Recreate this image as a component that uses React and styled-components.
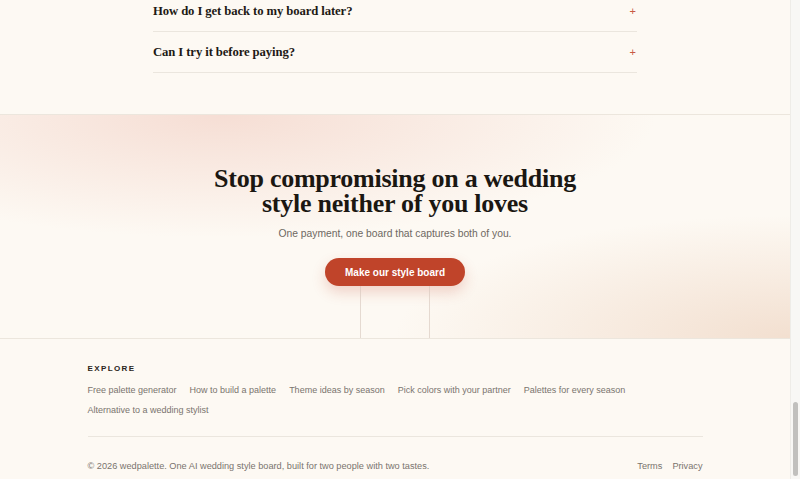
import React, { useLayoutEffect, useRef } from "react";
import styled, { createGlobalStyle } from "styled-components";

const GlobalStyle = createGlobalStyle`
  html, body {
    margin: 0;
    padding: 0;
    height: 100%;
    overflow: hidden;
    background: #fdf9f3;
  }
  #root {
    height: 100%;
  }
`;

const Window = styled.div`
  display: flex;
  height: 100vh;
`;

const Page = styled.div`
  flex: 1;
  overflow-y: scroll;
  scrollbar-width: none;
  background: #fdf9f3;
  font-family: "Liberation Sans", Arial, sans-serif;
  color: #1b1712;

  &::-webkit-scrollbar {
    display: none;
  }
`;

const ScrollRail = styled.div`
  width: 10px;
  display: flex;
  flex-direction: column;
  justify-content: flex-end;
  align-items: center;
  padding-bottom: 3px;
  box-sizing: border-box;
  background: #f8f7f5;
  border-left: 1px solid #eeece8;
`;

const ScrollThumb = styled.div`
  width: 5px;
  height: 74px;
  border-radius: 3px;
  background: #c1c0be;
`;

const FaqSection = styled.section`
  padding: 60px 0 41px;
  border-bottom: 1px solid #ece6dd;
`;

const FaqList = styled.div`
  width: 484px;
  margin: 0 auto;
`;

const FaqTitle = styled.h2`
  font-family: "Liberation Serif", serif;
  font-size: 26px;
  margin: 0 0 20px;
  text-align: center;
`;

const FaqRow = styled.div`
  display: flex;
  align-items: center;
  justify-content: space-between;
  height: 40px;
  border-bottom: 1px solid #ebe6de;
`;

const Question = styled.span`
  font-family: "Liberation Serif", serif;
  font-weight: 700;
  font-size: 12.7px;
  letter-spacing: -0.1px;
  color: #1e1915;
`;

const Plus = styled.span`
  color: #c75a43;
  font-size: 11px;
  font-weight: 400;
  padding-right: 1px;
`;

const Cta = styled.section`
  display: flex;
  flex-direction: column;
  align-items: center;
  padding-top: 51px;
  border-bottom: 1px solid #ece6dd;
  background:
    radial-gradient(ellipse 55% 55% at 28% 0%, rgba(245, 219, 209, 0.9), rgba(245, 219, 209, 0) 100%),
    radial-gradient(ellipse 50% 55% at 100% 100%, rgba(242, 222, 206, 0.95), rgba(242, 222, 206, 0) 100%),
    #fdf9f3;
`;

const CtaTitle = styled.h2`
  margin: 0;
  font-family: "Liberation Serif", serif;
  font-weight: 700;
  font-size: 26px;
  line-height: 25px;
  letter-spacing: -0.25px;
  text-align: center;
  color: #1b1712;
`;

const CtaText = styled.p`
  margin: 11px 0 0;
  font-size: 10.3px;
  line-height: 14px;
  color: #6e6862;
`;

const CtaButton = styled.button`
  margin-top: 17px;
  height: 28px;
  padding: 0 20px;
  border: none;
  border-radius: 14px;
  background: #c0442a;
  color: #fff;
  font-family: "Liberation Sans", Arial, sans-serif;
  font-size: 10px;
  font-weight: 700;
  box-shadow: 0 6px 14px rgba(192, 68, 42, 0.22);
`;

const Stems = styled.div`
  width: 68px;
  height: 52px;
  border-left: 1px solid rgba(214, 196, 186, 0.6);
  border-right: 1px solid rgba(214, 196, 186, 0.6);
`;

const Footer = styled.footer`
  padding: 25px 0 6px;
`;

const FooterInner = styled.div`
  width: 615px;
  margin: 0 auto;
`;

const Eyebrow = styled.div`
  font-size: 8px;
  line-height: 10px;
  font-weight: 700;
  letter-spacing: 1.4px;
  color: #2a2520;
`;

const LinkList = styled.div`
  display: flex;
  flex-wrap: wrap;
  column-gap: 13px;
  margin-top: 6px;
  padding-bottom: 16px;
  border-bottom: 1px solid #ebe6de;
`;

const FooterLink = styled.a`
  font-size: 9px;
  line-height: 20px;
  color: #7a746e;
  text-decoration: none;
`;

const BottomRow = styled.div`
  display: flex;
  justify-content: space-between;
  align-items: center;
  padding: 22px 0 0;
  line-height: 14px;
  font-size: 9.2px;
  color: #7a746e;
`;

const Legal = styled.div`
  display: flex;
  gap: 10px;

  a {
    font-size: 9.2px;
    line-height: 14px;
  }
`;

const questions = [
  "What exactly is in my style board?",
  "How does the quiz work for two people?",
  "What if we still disagree after the quiz?",
  "How long does it take?",
  "Is this a subscription?",
  "Can we share the board with our planner?",
  "How do I get back to my board later?",
  "Can I try it before paying?",
];

const links = [
  "Free palette generator",
  "How to build a palette",
  "Theme ideas by season",
  "Pick colors with your partner",
  "Palettes for every season",
  "Alternative to a wedding stylist",
];

export default function App() {
  const pageRef = useRef(null);

  useLayoutEffect(() => {
    const el = pageRef.current;
    if (el) el.scrollTop = el.scrollHeight;
  }, []);

  return (
    <Window>
      <GlobalStyle />
      <Page ref={pageRef}>
        <FaqSection>
          <FaqList>
            <FaqTitle>Questions couples ask</FaqTitle>
            {questions.map((q) => (
              <FaqRow key={q}>
                <Question>{q}</Question>
                <Plus>+</Plus>
              </FaqRow>
            ))}
          </FaqList>
        </FaqSection>

        <Cta>
          <CtaTitle>
            Stop compromising on a wedding
            <br />
            style neither of you loves
          </CtaTitle>
          <CtaText>One payment, one board that captures both of you.</CtaText>
          <CtaButton>Make our style board</CtaButton>
          <Stems />
        </Cta>

        <Footer>
          <FooterInner>
            <Eyebrow>EXPLORE</Eyebrow>
            <LinkList>
              {links.map((l) => (
                <FooterLink key={l} href="#">
                  {l}
                </FooterLink>
              ))}
            </LinkList>
            <BottomRow>
              <span>
                © 2026 wedpalette. One AI wedding style board, built for two
                people with two tastes.
              </span>
              <Legal>
                <FooterLink href="#">Terms</FooterLink>
                <FooterLink href="#">Privacy</FooterLink>
              </Legal>
            </BottomRow>
          </FooterInner>
        </Footer>
      </Page>
      <ScrollRail>
        <ScrollThumb />
      </ScrollRail>
    </Window>
  );
}
